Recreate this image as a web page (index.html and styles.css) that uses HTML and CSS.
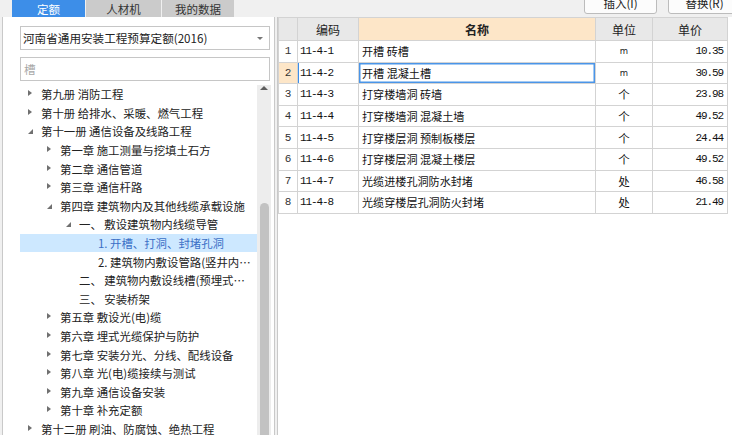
FILE: index.html
```html
<!DOCTYPE html>
<html lang="zh-CN">
<head>
<meta charset="utf-8">
<title>定额</title>
<link rel="stylesheet" href="styles.css">
</head>
<body>
<div class="app">
  <div class="left">
    <div class="tabs">
      <div class="tab active">定额</div>
      <div class="tab t2">人材机</div>
      <div class="tab t3">我的数据</div>
    </div>
    <div class="panel">
      <div class="select">
        <span>河南省通用安装工程预算定额(2016)</span>
        <span class="sel-arrow"></span>
      </div>
      <div class="search">槽</div>
      <div class="tree-wrap">
        <div class="tree">
          <div class="row l1"><span class="caret c-r"></span><span class="txt">第九册 消防工程</span></div>
          <div class="row l1"><span class="caret c-r"></span><span class="txt">第十册 给排水、采暖、燃气工程</span></div>
          <div class="row l1"><span class="caret c-d"></span><span class="txt">第十一册 通信设备及线路工程</span></div>
          <div class="row l2"><span class="caret c-r"></span><span class="txt">第一章 施工测量与挖填土石方</span></div>
          <div class="row l2"><span class="caret c-r"></span><span class="txt">第二章 通信管道</span></div>
          <div class="row l2"><span class="caret c-r"></span><span class="txt">第三章 通信杆路</span></div>
          <div class="row l2"><span class="caret c-d"></span><span class="txt">第四章 建筑物内及其他线缆承载设施</span></div>
          <div class="row l3"><span class="caret c-d"></span><span class="txt">一、 敷设建筑物内线缆导管</span></div>
          <div class="row l4 sel"><span class="caret"></span><span class="txt">1. 开槽、打洞、封堵孔洞</span></div>
          <div class="row l4"><span class="caret"></span><span class="txt">2. 建筑物内敷设管路(竖井内敷设管路)</span></div>
          <div class="row l3"><span class="caret"></span><span class="txt">二、 建筑物内敷设线槽(预埋式、明装式)</span></div>
          <div class="row l3"><span class="caret"></span><span class="txt">三、 安装桥架</span></div>
          <div class="row l2"><span class="caret c-r"></span><span class="txt">第五章 敷设光(电)缆</span></div>
          <div class="row l2"><span class="caret c-r"></span><span class="txt">第六章 埋式光缆保护与防护</span></div>
          <div class="row l2"><span class="caret c-r"></span><span class="txt">第七章 安装分光、分线、配线设备</span></div>
          <div class="row l2"><span class="caret c-r"></span><span class="txt">第八章 光(电)缆接续与测试</span></div>
          <div class="row l2"><span class="caret c-r"></span><span class="txt">第九章 通信设备安装</span></div>
          <div class="row l2"><span class="caret c-r"></span><span class="txt">第十章 补充定额</span></div>
          <div class="row l1"><span class="caret c-r"></span><span class="txt">第十二册 刷油、防腐蚀、绝热工程</span></div>
        </div>
        <div class="scroll">
          <div class="sc-up"><span class="sc-tri"></span></div>
          <div class="thumb"></div>
        </div>
      </div>
    </div>
  </div>
  <div class="right">
    <div class="toolbar">
      <button class="btn">插入(I)</button>
      <button class="btn">替换(R)</button>
    </div>
    <div class="grid">
      <table>
        <colgroup>
          <col class="w-num"><col class="w-code"><col class="w-name"><col class="w-unit"><col class="w-price">
        </colgroup>
        <thead>
          <tr><th></th><th>编码</th><th class="h-name">名称</th><th>单位</th><th>单价</th></tr>
        </thead>
        <tbody>
          <tr><td class="num">1</td><td class="code">11-4-1</td><td class="name">开槽 砖槽</td><td class="unit m">m</td><td class="price">10.35</td></tr>
          <tr class="cur"><td class="num">2</td><td class="code">11-4-2</td><td class="name">开槽 混凝土槽</td><td class="unit m">m</td><td class="price">30.59</td></tr>
          <tr><td class="num">3</td><td class="code">11-4-3</td><td class="name">打穿楼墙洞 砖墙</td><td class="unit">个</td><td class="price">23.98</td></tr>
          <tr><td class="num">4</td><td class="code">11-4-4</td><td class="name">打穿楼墙洞 混凝土墙</td><td class="unit">个</td><td class="price">49.52</td></tr>
          <tr><td class="num">5</td><td class="code">11-4-5</td><td class="name">打穿楼层洞 预制板楼层</td><td class="unit">个</td><td class="price">24.44</td></tr>
          <tr><td class="num">6</td><td class="code">11-4-6</td><td class="name">打穿楼层洞 混凝土楼层</td><td class="unit">个</td><td class="price">49.52</td></tr>
          <tr><td class="num">7</td><td class="code">11-4-7</td><td class="name">光缆进楼孔洞防水封堵</td><td class="unit">处</td><td class="price">46.58</td></tr>
          <tr><td class="num">8</td><td class="code">11-4-8</td><td class="name">光缆穿楼层孔洞防火封堵</td><td class="unit">处</td><td class="price">21.49</td></tr>
        </tbody>
      </table>
    </div>
  </div>
</div>
</body>
</html>
```
FILE: styles.css
```css
* { box-sizing: border-box; }
html, body { margin: 0; padding: 0; }
body {
  background: #f0f0f0;
  font-family: "Noto Sans CJK SC", "Microsoft YaHei", sans-serif;
  font-size: 12px;
  color: #222;
  overflow: hidden;
}
.app { display: flex; height: 435px; }

/* left side */
.left { width: 275px; display: flex; flex-direction: column; flex: none; }
.tabs { height: 17px; display: flex; padding-left: 12px; gap: 1px; flex: none; }
.tab {
  width: 73px; background: #cbcbcb; color: #333;
  display: flex; align-items: center; justify-content: center;
  font-size: 11.5px; line-height: 14px;
}
.tab.t2 { width: 75px; }
.tab.t3 { width: 72px; }
.tab.active { background: #3d8ee8; color: #fff; }

.panel {
  flex: 1; min-height: 0;
  margin-left: 2px; width: 273px;
  background: #fff;
  border-left: 1px solid #c9c9c9; border-right: 1px solid #c9c9c9;
  padding: 9px 3px 0 17px;
  display: flex; flex-direction: column;
}
.select {
  height: 24px; margin-right: 1px;
  border: 1px solid #c6c6c6;
  display: flex; align-items: center; justify-content: space-between;
  padding: 0 6px 0 2px; color: #222; flex: none; font-size: 11.6px;
}
.sel-arrow {
  width: 0; height: 0;
  border-left: 3px solid transparent; border-right: 3px solid transparent;
  border-top: 3px solid #777;
}
.search {
  margin-top: 7px; margin-right: 1px; height: 24px; flex: none;
  border: 1px solid #c6c6c6;
  display: flex; align-items: center; padding-left: 3px; color: #a8a8a8; font-size: 11.6px;
}
.tree-wrap { margin-top: 4px; flex: 1; min-height: 0; display: flex; }
.tree { width: 237px; flex: none; overflow: hidden; }
.row {
  height: 18.6px; display: flex; align-items: center;
  white-space: nowrap; color: #222; font-size: 11.4px;
}
.row .txt { overflow: hidden; text-overflow: ellipsis; flex: 1; min-width: 0; padding-right: 4px; }
.row.sel { background: #cde8ff; color: #3a6fc6; }
.l1 { padding-left: 8px; }
.l2 { padding-left: 27px; }
.l3 { padding-left: 46px; }
.l4 { padding-left: 65px; }
.caret { width: 13px; flex: none; height: 8px; position: relative; }
.c-r::before {
  content: ""; position: absolute; left: 0; top: 0;
  border-left: 4px solid #707070;
  border-top: 3.5px solid transparent; border-bottom: 3.5px solid transparent;
}
.c-d::before {
  content: ""; position: absolute; left: 0; top: 2px;
  border-bottom: 5px solid #707070;
  border-left: 5px solid transparent;
}

.scroll { width: 14px; flex: none; background: #ededed; display: flex; flex-direction: column; align-items: center; }
.sc-up { height: 10px; display: flex; justify-content: center; padding-top: 1px; flex: none; }
.sc-tri {
  width: 0; height: 0;
  border-left: 4px solid transparent; border-right: 4px solid transparent;
  border-bottom: 4px solid #5e5e5e;
}
.thumb { margin-top: 108px; flex: 1; width: 9px; background: #c2c2c2; border-radius: 5px 5px 0 0; }

/* right side */
.right { flex: 1; min-width: 0; display: flex; flex-direction: column; margin-left: 2px; }
.toolbar { height: 17px; flex: none; display: flex; gap: 11px; padding-left: 307px; overflow: hidden; }
.btn {
  flex: none; width: 73px; height: 22px; margin-top: -8px;
  background: #fcfcfc; border: 1px solid #bcbcbc; border-radius: 3px;
  font-family: "Noto Sans CJK SC", sans-serif; font-size: 11.5px; line-height: 14px; color: #222;
  padding: 0;
}
.grid { flex: 1; background: #fff; border-left: 1px solid #c9c9c9; }
table { border-collapse: collapse; table-layout: fixed; width: 449px; }
.w-num { width: 19px; }
.w-code { width: 61px; }
.w-name { width: 237px; }
.w-unit { width: 57px; }
.w-price { width: 75px; }
th, td { border: 1px solid #d3d3d3; padding: 0; white-space: nowrap; overflow: hidden; }
thead tr { height: 23px; }
th { background: #e8e8e8; font-weight: normal; font-size: 12px; color: #222; }
th.h-name { background: #fde6c8; font-weight: bold; }
tbody tr { height: 21.6px; }
td { font-size: 11.1px; color: #111; }
td.num { text-align: center; font-family: "Liberation Mono", monospace; font-size: 11px; color: #333; }
td.code { font-family: "Liberation Mono", monospace; font-size: 11px; letter-spacing: -1.1px; padding-left: 2px; }
td.name { padding-left: 3px; }
td.unit { text-align: center; font-size: 11.5px; }
td.unit.m { font-family: "DejaVu Sans", sans-serif; font-size: 8.5px; color: #222; }
td.price { text-align: right; padding-right: 4px; font-family: "Liberation Mono", monospace; font-size: 11px; letter-spacing: -1.1px; }
tr.cur td.num { background: #fde6c8; }
tr.cur td.code { box-shadow: inset 1px 0 0 #3d8ee8; }
tr.cur td.name { box-shadow: inset 0 0 0 1.5px #4a95e8; }
```
